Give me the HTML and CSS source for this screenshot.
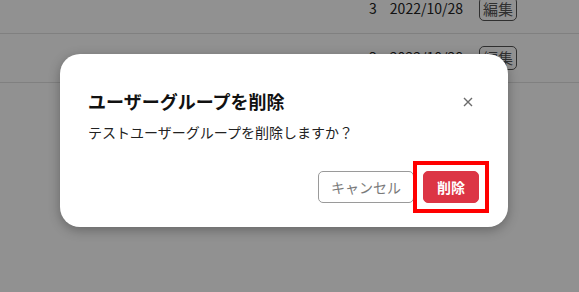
FILE: index.html
```html
<!DOCTYPE html>
<html lang="ja">
<head>
  <meta charset="UTF-8" />
  <meta name="viewport" content="width=device-width, initial-scale=1.0" />
  <title>ユーザーグループ</title>
  <link rel="stylesheet" href="styles.css">
</head>
<body>
  <div class="list">
    <div class="row">
      <span class="count">3</span>
      <span class="date">2022/10/28</span>
      <button class="edit">編集</button>
    </div>
    <div class="row">
      <span class="count">3</span>
      <span class="date">2022/10/28</span>
      <button class="edit">編集</button>
    </div>
  </div>

  <div class="backdrop"></div>

  <div class="modal">
    <div class="modal-header">
      <h2>ユーザーグループを削除</h2>
      <button class="close" aria-label="閉じる">
        <svg width="10" height="10" viewBox="0 0 10 10">
          <path d="M1 1 L9 9 M9 1 L1 9" stroke="#6b6b6b" stroke-width="1.4" fill="none" />
        </svg>
      </button>
    </div>
    <p class="modal-body">テストユーザーグループを削除しますか？</p>
    <div class="modal-footer">
      <button class="btn btn-cancel">キャンセル</button>
      <button class="btn btn-delete">削除</button>
    </div>
  </div>
</body>
</html>
```

FILE: styles.css
```css
body {
  margin: 0;
  font-family: "Noto Sans CJK JP", "Noto Sans", sans-serif;
  background-color: #fff;
  height: 292px;
  overflow: hidden;
}
.list {
  margin-top: -15px;
}
.row {
  display: flex;
  align-items: center;
  justify-content: flex-end;
  height: 48px;
  padding-right: 62px;
  border-bottom: 1px solid #e2e2e2;
  font-size: 14px;
  color: #222;
}
.count,
.date {
  padding-bottom: 3px;
}
.count {
  margin-right: 13px;
}
.date {
  margin-right: 16px;
}
.edit {
  font-family: inherit;
  font-size: 15px;
  line-height: 20px;
  padding: 1px 3px;
  color: #555;
  background: #fff;
  border: 1px solid #555;
  border-radius: 5px;
}
.backdrop {
  position: absolute;
  inset: 0;
  background-color: rgba(0, 0, 0, 0.43);
}
.modal {
  position: absolute;
  left: 60px;
  top: 54px;
  width: 448px;
  box-sizing: border-box;
  padding: 34px 28px 24px;
  background-color: white;
  border-radius: 20px;
  box-shadow: 0 3px 12px rgba(0, 0, 0, 0.3);
}
.modal-header {
  display: flex;
  align-items: center;
  justify-content: space-between;
}
.modal-header h2 {
  margin: 0;
  font-size: 18px;
  line-height: 27px;
  font-weight: bold;
  color: #111;
}
.close {
  width: 24px;
  height: 24px;
  padding: 0;
  border: none;
  background: none;
  display: flex;
  align-items: center;
  justify-content: center;
}
.modal-body {
  margin: 7px 0 0;
  font-size: 14px;
  line-height: 21px;
  color: #222;
}
.modal-footer {
  display: flex;
  justify-content: flex-end;
  gap: 9px;
  margin-top: 28px;
  padding-right: 1px;
}
.btn {
  font-family: inherit;
  font-size: 14px;
  line-height: 20px;
  padding: 5px 13px;
  border-radius: 5px;
  cursor: pointer;
}
.btn-cancel {
  color: #7a7a7a;
  background: white;
  border: 1px solid #9a9a9a;
  padding: 5px 12px;
}
.btn-delete {
  position: relative;
  color: white;
  font-weight: bold;
  background-color: #dc3545;
  border: 1px solid #dc3545;
}
/* annotation frame around the delete button */
.btn-delete::after {
  content: "";
  position: absolute;
  inset: -11px;
  border: 4px solid #ff0000;
}
```
